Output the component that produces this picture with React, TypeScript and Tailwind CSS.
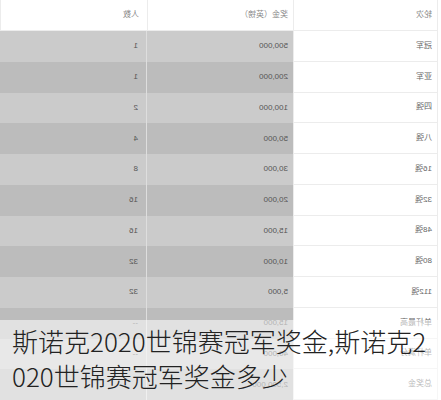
import React from "react";

const rows: [string, string, string][] = [
  ["冠军", "500,000", "1"],
  ["亚军", "200,000", "1"],
  ["四强", "100,000", "2"],
  ["八强", "50,000", "4"],
  ["16强", "30,000", "8"],
  ["32强", "20,000", "16"],
  ["48强", "15,000", "16"],
  ["80强", "10,000", "32"],
  ["112强", "5,000", "32"],
  ["单杆最高", "15,000", "--"],
  ["单杆满分", "40,000", "--"],
  ["总奖金", "2,500,000", ""],
];

export default function App() {
  return (
    <div
      className="relative w-[441px] h-[400px] overflow-hidden bg-white"
      style={{ fontFamily: '"Liberation Sans", "Noto Sans CJK SC", sans-serif' }}
    >
      <div className="-scale-x-100 w-[441px] h-[400px] pl-[3px]">
        <div className="grid grid-cols-[145px_146px_147px] text-[8px]">
          <div className="h-[31px] flex items-center pl-[5px] text-[#888] border-r border-b border-l border-[#ececec] bg-white">轮次</div>
          <div className="h-[31px] flex items-center pl-[5px] text-[#888] border-r border-b border-[#ececec] bg-white">奖金（英镑）</div>
          <div className="h-[31px] flex items-center pl-[8px] text-[#888] border-r border-b border-[#ececec] bg-white">人数</div>
          {rows.map((r, i) => {
            const bg = i % 2 === 0 ? "bg-[#cbcbcb]" : "bg-[#bcbcbc]";
            return (
              <React.Fragment key={i}>
                <div className="h-[30.75px] flex items-center pl-[5px] text-[#666] bg-white border-l border-r border-b border-[#ececec]">
                  {r[0]}
                </div>
                <div className={`h-[30.75px] flex items-center pl-[5px] text-[#555] ${bg}`}>{r[1]}</div>
                <div className={`h-[30.75px] flex items-center pl-[8px] text-[#555] border-l border-[#dedede] ${bg}`}>{r[2]}</div>
              </React.Fragment>
            );
          })}
        </div>
      </div>
      <div
        className="absolute left-0 right-0 top-[320px] bottom-0 bg-white/55 pl-[12px] pt-[3px] text-[26px] leading-[35px] text-[#222]"
        style={{ fontFamily: '"Noto Sans CJK SC", sans-serif', fontWeight: 300 }}
      >
        <div className="whitespace-nowrap">斯诺克2020世锦赛冠军奖金,斯诺克2</div>
        <div className="whitespace-nowrap">020世锦赛冠军奖金多少</div>
      </div>
    </div>
  );
}
